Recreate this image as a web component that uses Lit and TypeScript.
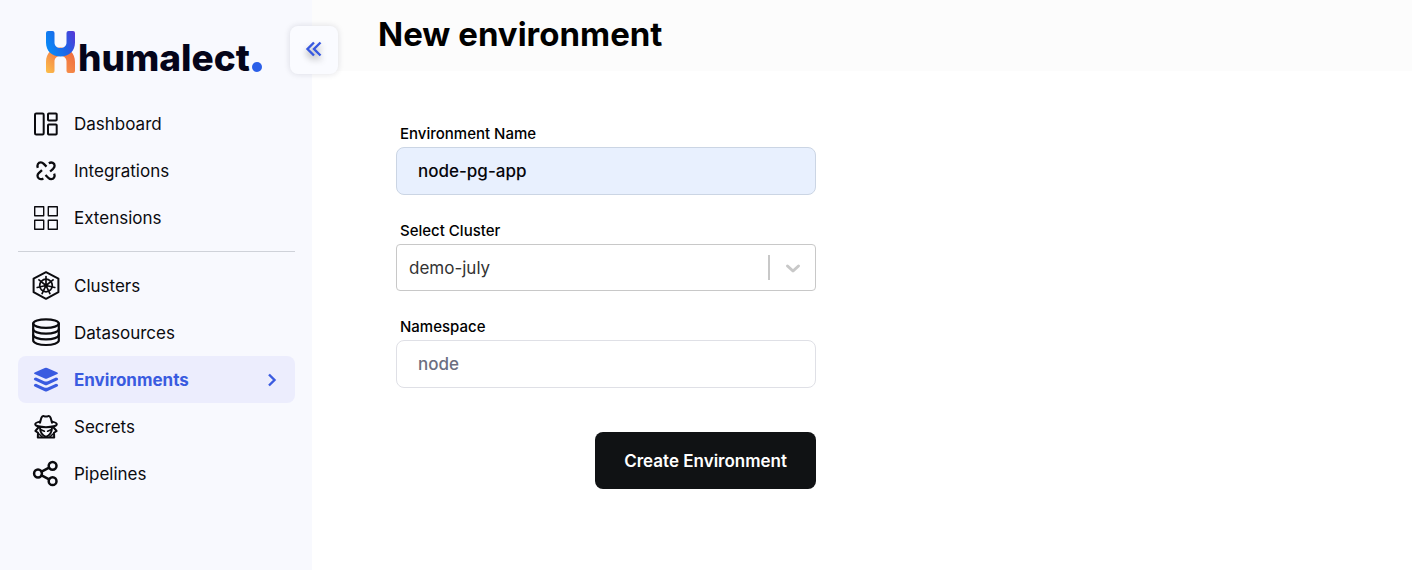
import { LitElement, html, svg, css, nothing } from "lit";
import { customElement, property, state } from "lit/decorators.js";
import { classMap } from "lit/directives/class-map.js";

type IconName =
  | "dashboard"
  | "integrations"
  | "extensions"
  | "clusters"
  | "datasources"
  | "environments"
  | "secrets"
  | "pipelines";

interface NavItem {
  label: string;
  icon: IconName;
}

const workspaceItems: NavItem[] = [
  { label: "Dashboard", icon: "dashboard" },
  { label: "Integrations", icon: "integrations" },
  { label: "Extensions", icon: "extensions" },
];

const resourceItems: NavItem[] = [
  { label: "Clusters", icon: "clusters" },
  { label: "Datasources", icon: "datasources" },
  { label: "Environments", icon: "environments" },
  { label: "Secrets", icon: "secrets" },
  { label: "Pipelines", icon: "pipelines" },
];

// Spokes of the ship's wheel, one every seventh of a turn.
const spokes = [0, 1, 2, 3, 4, 5, 6].map((i) => {
  const a = (i * 2 * Math.PI) / 7 - Math.PI / 2;
  return svg`<path d="M15 15L${15 + 9 * Math.cos(a)} ${15 + 9 * Math.sin(a)}" />`;
});

// All glyphs share a 30 by 30 grid.
const icons = {
  dashboard: svg`
    <g stroke-width="2">
      <rect x="4" y="4.5" width="8.7" height="21" rx="1.2" />
      <rect x="17" y="4.5" width="8.7" height="7" rx="0.8" />
      <rect x="17" y="15.5" width="8.7" height="10" rx="0.8" />
    </g>`,
  integrations: svg`
    <g stroke-width="2.3" stroke-linecap="butt">
      <path d="M6.8 11.800C5.800 9 7.200 6.400 9.800 6.400c1.300 0 2.100.6 3 1.500l2.700 2.700" />
      <path d="M17.800 7.200C20.800 5.600 23.600 7 23.600 9.800c0 1.300-.6 2.100-1.500 3l-3 2.700" />
      <path d="M23.200 17.600c1.200 3-.4 5.600-3 5.600-1.300 0-2.100-.6-3-1.500l-2.700-2.700" />
      <path d="M12.400 22.400C9.400 24 6.500 22.600 6.500 19.800c0-1.300.6-2.100 1.500-3l3-2.700" />
    </g>`,
  extensions: svg`
    <g stroke-width="1.4">
      <rect x="3.700" y="3.700" width="9" height="9" />
      <rect x="17.300" y="3.700" width="9" height="9" />
      <rect x="3.700" y="17.300" width="9" height="9" />
      <rect x="17.300" y="17.300" width="9" height="9" />
    </g>`,
  clusters: svg`
    <path stroke-width="2" d="M15 1.200L27.400 7.600v13.600L15 27.800 2.600 21.200V7.600z" />
    <g stroke-width="1.700" transform="translate(0 -0.500)">
      <circle cx="15" cy="15" r="6.300" />
      <circle cx="15" cy="15" r="1.200" />
      ${spokes}
    </g>`,
  datasources: svg`
    <g stroke-width="2.200">
      <ellipse cx="15" cy="5.600" rx="12.800" ry="4.300" />
      <path d="M2.200 5.600v17c0 2.400 5.700 4.400 12.800 4.400s12.800-2 12.800-4.400v-17" />
      <path d="M2.200 11.300c0 2.400 5.700 4.400 12.800 4.400s12.800-2 12.800-4.400" />
      <path d="M2.200 17c0 2.400 5.700 4.400 12.800 4.400s12.800-2 12.800-4.400" />
    </g>`,
  environments: svg`
    <g fill="currentColor" stroke="none">
      <path d="M13.800 3q1.200-.5 2.400 0l10.200 4.400q1.300.8 0 1.600L16.200 13.600q-1.200.5-2.400 0L3.600 9q-1.300-.8 0-1.600z" />
      <path d="M3.400 13q-1.300 1.200.2 2.200l10.200 4.700q1.200.5 2.400 0l10.200-4.700q1.500-1 .2-2.200l-1.600-.5-8.200 3.700q-1.800.7-3.600 0L5 12.500z" />
      <path d="M3.400 19.300q-1.300 1.200.2 2.200l10.200 4.700q1.200.5 2.400 0l10.200-4.700q1.500-1 .2-2.200l-1.600-.5-8.200 3.700q-1.800.7-3.600 0L5 18.800z" />
    </g>`,
  secrets: svg`
    <g stroke-width="2">
      <path d="M9 10.800l1-3.900c.5-2.100 1.800-3.300 3.200-2.700q1.800.7 3.600 0c1.400-.6 2.700.6 3.200 2.700l1 3.900" />
      <path d="M8.800 9.600C5.800 10.300 4.200 11.200 4.200 12.200 4.200 13.900 9 15.200 15 15.200s10.800-1.300 10.800-3c0-1-1.600-1.900-4.600-2.600" />
      <path d="M7.400 15.500L4.400 19l2.600 1.800L6.800 25.600h16.400l-.2-4.800 2.600-1.800-3-3.500" />
      <path d="M9 15.800c.2 4.400 2.400 7.800 6 9.200 3.600-1.400 5.800-4.800 6-9.200" />
    </g>
    <g stroke-width="1.600">
      <path d="M10 17.800l3.400 1.400M20 17.800l-3.400 1.400M8 22l3.200 3M22 22l-3.200 3" />
    </g>`,
  pipelines: svg`
    <g stroke-width="2.500">
      <circle cx="7" cy="14.500" r="3.900" />
      <circle cx="21.600" cy="6.800" r="3.900" />
      <circle cx="21.600" cy="22.200" r="3.900" />
      <path d="M10.600 12.700l7.500-4M10.600 16.300l7.500 4" />
    </g>`,
};

@customElement("nav-icon")
class NavIcon extends LitElement {
  @property() name: IconName = "dashboard";

  static styles = css`
    :host {
      display: block;
      width: 30px;
      height: 30px;
    }
    .glyph {
      display: block;
      width: 100%;
      height: 100%;
      fill: none;
      stroke: currentColor;
      stroke-linejoin: round;
      stroke-linecap: round;
    }
  `;

  render() {
    return html`<svg class="glyph" viewBox="0 0 30 30" aria-hidden="true">${icons[this.name]}</svg>`;
  }
}

@customElement("side-bar")
class SideBar extends LitElement {
  @state() private current = "Environments";

  static styles = css`
    :host {
      display: block;
      position: relative;
      box-sizing: border-box;
      padding: 30px 17px 24px 18px;
      background: #f8f9fe;
    }
    .brand {
      display: flex;
      align-items: flex-end;
      height: 44px;
      margin: 0 0 26px 27px;
      color: #05051a;
      text-decoration: none;
    }
    .mark {
      width: 31px;
      height: 44px;
      margin-right: 2px;
    }
    .word {
      font-size: 37px;
      font-weight: 800;
      line-height: 32px;
    }
    .dot {
      width: 10px;
      height: 10px;
      margin: 0 0 2px 2px;
      border-radius: 50%;
      background: #2b5fe8;
    }
    .collapse {
      position: absolute;
      top: 26px;
      right: -26px;
      display: grid;
      place-items: center;
      width: 48px;
      height: 48px;
      padding: 0;
      border: 0;
      border-radius: 8px;
      background: #fafbff;
      box-shadow: 0 0 6px rgba(30, 30, 60, 0.14);
      cursor: pointer;
    }
    .chevrons {
      width: 20px;
      height: 20px;
      fill: none;
      stroke: #3758e0;
      stroke-width: 2.4;
      filter: drop-shadow(0 4px 3px rgba(0, 0, 0, 0.35));
    }
    .list {
      margin: 0;
      padding: 0;
      list-style: none;
    }
    .list + .list {
      margin-top: 10px;
      padding-top: 10px;
      border-top: 1px solid #cfd2d9;
    }
    .link {
      display: flex;
      align-items: center;
      gap: 13px;
      height: 47px;
      padding: 0 16px 0 13px;
      border-radius: 8px;
      color: #0b0b0f;
      font-size: 17px;
      line-height: 24px;
      text-decoration: none;
    }
    .active {
      background: #ecedfd;
      color: #3a5be0;
      font-weight: 700;
    }
    .text {
      flex: 1;
    }
    .arrow {
      width: 14px;
      height: 14px;
      fill: none;
      stroke: currentColor;
      stroke-width: 2.4;
    }
  `;

  private select(event: Event, label: string) {
    event.preventDefault();
    this.current = label;
  }

  private renderList(items: NavItem[]) {
    return html`<ul class="list">
      ${items.map((item) => {
        const active = item.label === this.current;
        return html`<li>
          <a
            class=${classMap({ link: true, active })}
            href="#"
            aria-current=${active ? "page" : nothing}
            @click=${(e: Event) => this.select(e, item.label)}
          >
            <nav-icon name=${item.icon}></nav-icon>
            <span class="text">${item.label}</span>
            ${active
              ? html`<svg class="arrow" viewBox="0 0 14 14" aria-hidden="true"><path d="M4 1.500l5.500 5.500L4 12.500" /></svg>`
              : nothing}
          </a>
        </li>`;
      })}
    </ul>`;
  }

  render() {
    return html`
      <a class="brand" href="#">
        <svg class="mark" viewBox="0 0 31 44" aria-hidden="true">
          <defs>
            <linearGradient id="top" x1="0" y1="0.4" x2="1" y2="0">
              <stop offset="0" stop-color="#0a86f5" />
              <stop offset="0.5" stop-color="#1f63e6" />
              <stop offset="1" stop-color="#5a35d6" />
            </linearGradient>
            <linearGradient id="bottom" x1="0" y1="1" x2="1" y2="0.2">
              <stop offset="0" stop-color="#fcc04a" />
              <stop offset="0.5" stop-color="#f58a48" />
              <stop offset="1" stop-color="#ee6a3c" />
            </linearGradient>
          </defs>
          <path
            fill="url(#bottom)"
            d="M1 41V32C1 23 7 17.500 15.500 17.500S30 23 30 32v9q0 2-2 2h-4.500q-2 0-2-2V31.500C21.500 28 19 26 15.500 26S9.500 28 9.500 31.500V41q0 2-2 2H3q-2 0-2-2z"
          />
          <path
            fill="url(#top)"
            d="M1 3v9.500C1 21 7 26.500 15.500 26.500S30 21 30 12.500V3q0-2-2-2h-4.500q-2 0-2 2v9.500c0 3.500-2.500 5.500-6 5.500s-6-2-6-5.500V3q0-2-2-2H3Q1 1 1 3z"
          />
        </svg>
        <span class="word">humalect</span>
        <span class="dot"></span>
      </a>
      <nav aria-label="Main">${this.renderList(workspaceItems)}${this.renderList(resourceItems)}</nav>
      <button class="collapse" type="button" aria-label="Collapse sidebar">
        <svg class="chevrons" viewBox="0 0 20 20" aria-hidden="true">
          <path d="M10 2.500L3.500 9l6.500 6.500M16.500 2.500L10 9l6.500 6.500" />
        </svg>
      </button>
    `;
  }
}

@customElement("environment-form")
class EnvironmentForm extends LitElement {
  static styles = css`
    :host {
      display: block;
    }
    .form {
      display: flex;
      flex-direction: column;
      gap: 26px;
      max-width: 420px;
    }
    .field {
      display: flex;
      flex-direction: column;
      gap: 3px;
    }
    .label {
      padding-left: 4px;
      font-size: 15px;
      font-weight: 500;
      line-height: 20px;
    }
    .input,
    .select {
      box-sizing: border-box;
      width: 100%;
      margin: 0;
      font-family: inherit;
      font-size: 17px;
      outline: none;
    }
    .input {
      height: 48px;
      padding: 0 21px;
      border: 1px solid #dfe0e6;
      border-radius: 8px;
      background: #fff;
      color: #05050a;
      font-weight: 500;
    }
    .input::placeholder {
      color: #6b6e80;
      opacity: 1;
    }
    .filled {
      border-color: #cbd5e4;
      background: #e8f0fe;
    }
    .picker {
      display: grid;
      align-items: center;
    }
    .select {
      grid-area: 1 / 1;
      height: 47px;
      padding: 0 56px 0 12px;
      border: 1px solid #c8c8c8;
      border-radius: 4px;
      background: #fff;
      color: #333;
      appearance: none;
    }
    .indicator {
      grid-area: 1 / 1;
      justify-self: end;
      display: flex;
      align-items: center;
      margin-right: 13px;
      padding-left: 13px;
      height: 25px;
      border-left: 2px solid #c8c8c8;
      pointer-events: none;
    }
    .caret {
      width: 20px;
      height: 20px;
      fill: none;
      stroke: #c8c8c8;
      stroke-width: 3;
      stroke-linecap: round;
      stroke-linejoin: round;
    }
    .submit {
      align-self: flex-end;
      height: 57px;
      margin-top: 18px;
      padding: 0 29px;
      border: 0;
      border-radius: 8px;
      background: #101214;
      color: #fff;
      font-family: inherit;
      font-size: 17px;
      font-weight: 600;
      cursor: pointer;
    }
  `;

  render() {
    return html`<form class="form" @submit=${(e: Event) => e.preventDefault()}>
      <div class="field">
        <label class="label" for="name">Environment Name</label>
        <input class="input filled" id="name" type="text" .value=${"node-pg-app"} />
      </div>
      <div class="field">
        <label class="label" for="cluster">Select Cluster</label>
        <div class="picker">
          <select class="select" id="cluster">
            <option>demo-july</option>
          </select>
          <span class="indicator">
            <svg class="caret" viewBox="0 0 20 20" aria-hidden="true"><path d="M4.500 8l5.500 5 5.500-5" /></svg>
          </span>
        </div>
      </div>
      <div class="field">
        <label class="label" for="namespace">Namespace</label>
        <input class="input" id="namespace" type="text" placeholder="node" />
      </div>
      <button class="submit" type="submit">Create Environment</button>
    </form>`;
  }
}

@customElement("app-root")
class AppRoot extends LitElement {
  static styles = css`
    :host {
      display: grid;
      grid-template-columns: 312px minmax(0, 1fr);
      min-height: 100vh;
      background: #fff;
      color: #000;
      font-family: Inter, "Liberation Sans", sans-serif;
    }
    .sidebar {
      z-index: 1;
    }
    .header {
      padding: 12px 66px 15px;
      background: #fcfcfc;
    }
    .title {
      margin: 0;
      font-size: 33px;
      font-weight: 700;
      line-height: 44px;
    }
    .content {
      padding: 53px 84px 40px;
    }
  `;

  render() {
    return html`
      <side-bar class="sidebar"></side-bar>
      <main>
        <header class="header"><h1 class="title">New environment</h1></header>
        <section class="content"><environment-form></environment-form></section>
      </main>
    `;
  }
}
